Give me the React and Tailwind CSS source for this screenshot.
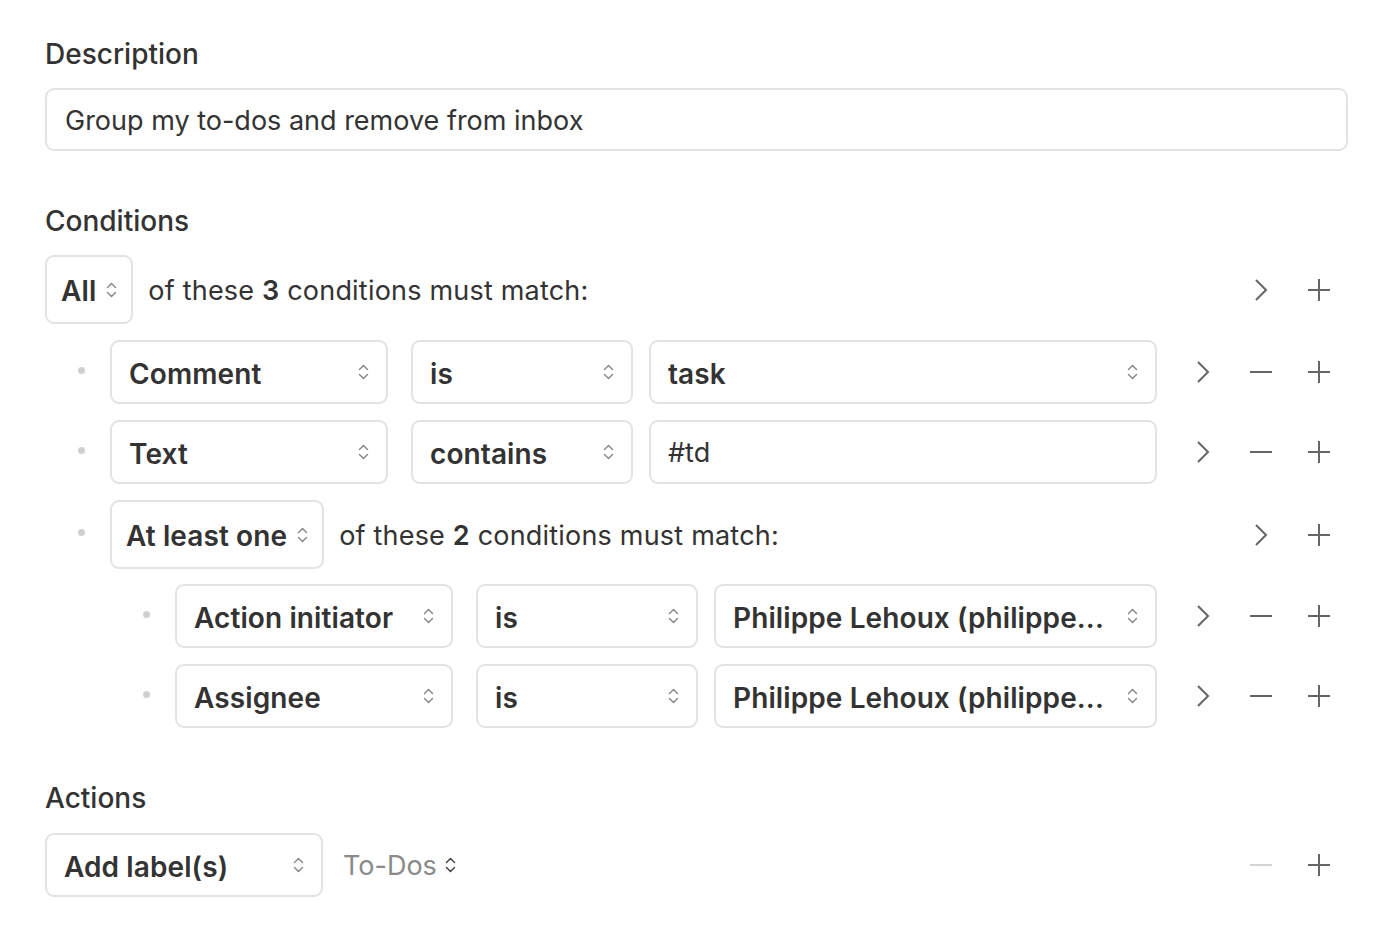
import React from "react";

function UpDown({ className = "text-[#8a8a8a]" }) {
  return (
    <svg width="11" height="18" viewBox="0 0 11 18" fill="none" className={className}>
      <path d="M1.5 6.5L5.5 2.5L9.5 6.5" stroke="currentColor" strokeWidth="1.5" strokeLinecap="round" strokeLinejoin="round" />
      <path d="M1.5 11.5L5.5 15.5L9.5 11.5" stroke="currentColor" strokeWidth="1.5" strokeLinecap="round" strokeLinejoin="round" />
    </svg>
  );
}

function ChevronRight() {
  return (
    <svg width="14" height="24" viewBox="0 0 14 24" fill="none" className="text-[#666]">
      <path d="M2 2L12 12L2 22" stroke="currentColor" strokeWidth="2" />
    </svg>
  );
}

function Minus({ light }) {
  return (
    <svg width="24" height="24" viewBox="0 0 24 24" fill="none" className={light ? "text-[#d4d4d4]" : "text-[#666]"}>
      <path d="M1 12H23" stroke="currentColor" strokeWidth="2" />
    </svg>
  );
}

function Plus() {
  return (
    <svg width="24" height="24" viewBox="0 0 24 24" fill="none" className="text-[#666]">
      <path d="M1 12H23M12 1V23" stroke="currentColor" strokeWidth="2" />
    </svg>
  );
}

function Slot({ children }) {
  return <div className="w-[58px] flex items-center justify-center">{children}</div>;
}

function Icons({ type }) {
  if (type === "group") {
    return (
      <div className="flex w-[174px] shrink-0">
        <Slot />
        <Slot><ChevronRight /></Slot>
        <Slot><Plus /></Slot>
      </div>
    );
  }
  if (type === "action") {
    return (
      <div className="flex w-[174px] shrink-0">
        <Slot />
        <Slot><Minus light /></Slot>
        <Slot><Plus /></Slot>
      </div>
    );
  }
  return (
    <div className="flex w-[174px] shrink-0">
      <Slot><ChevronRight /></Slot>
      <Slot><Minus /></Slot>
      <Slot><Plus /></Slot>
    </div>
  );
}

function Select({ label, className = "" }) {
  return (
    <div className={`h-[64px] flex items-center justify-between pl-[17px] pr-[17px] border-2 border-[#e3e3e3] rounded-[9px] bg-white ${className}`}>
      <span className="font-semibold text-[28px] tracking-[0.1px] text-[#333] truncate pt-[4px]">{label}</span>
      <UpDown />
    </div>
  );
}

function Bullet() {
  return (
    <div className="w-[65px] shrink-0 pl-[33px] -mt-1">
      <div className="w-[7px] h-[7px] rounded-full bg-[#d0d0d0]" />
    </div>
  );
}

function Leaf({ field, op, value, input }) {
  return (
    <div className="flex items-center">
      <Bullet />
      <Select label={field} className="w-[278px] shrink-0" />
      <Select label={op} className="w-[222px] shrink-0 ml-[23px]" />
      {input ? (
        <div className="h-[64px] flex-1 flex items-center pl-[17px] border-2 border-[#e3e3e3] rounded-[9px] ml-[16px] mr-[17px]">
          <span className="text-[27px] text-[#333] pt-[2px]">{value}</span>
        </div>
      ) : (
        <Select label={value} className="flex-1 min-w-0 ml-[16px] mr-[17px]" />
      )}
      <Icons />
    </div>
  );
}

function GroupHead({ mode, count, bullet }) {
  return (
    <div className="flex items-center">
      {bullet && <Bullet />}
      <div className="h-[69px] flex items-center gap-[10px] pl-[14px] pr-[14px] border-2 border-[#e3e3e3] rounded-[9px]">
        <span className="font-semibold text-[28px] tracking-[0.1px] text-[#333] pt-[3px]">{mode}</span>
        <UpDown />
      </div>
      <span className="ml-[15px] text-[27px] text-[#333] tracking-[0.2px] pt-[3px]">
        of these <b className="font-semibold">{count}</b> conditions must match:
      </span>
      <div className="flex-1" />
      <Icons type="group" />
    </div>
  );
}

export default function App() {
  return (
    <div className="min-h-screen bg-white pl-[45px] pr-[46px] pt-[38px] font-['Inter',sans-serif] text-[#333]">
      <div className="text-[28px] font-medium leading-[32px]">Description</div>
      <div className="mt-[18px] h-[63px] flex items-center px-[18px] border-2 border-[#e3e3e3] rounded-[9px]">
        <span className="text-[27px] text-[#333] pt-[3px]">Group my to-dos and remove from inbox</span>
      </div>

      <div className="mt-[54px] text-[28px] font-medium leading-[32px]">Conditions</div>
      <div className="mt-[18px] flex flex-col gap-[16px]">
        <GroupHead mode="All" count="3" />
        <Leaf field="Comment" op="is" value="task" />
        <Leaf field="Text" op="contains" value="#td" input />
        <GroupHead mode="At least one" count="2" bullet />
        <div className="pl-[65px] flex flex-col gap-[16px] -mt-[1px]">
          <Leaf field="Action initiator" op="is" value="Philippe Lehoux (philippe..." />
          <Leaf field="Assignee" op="is" value="Philippe Lehoux (philippe..." />
        </div>
      </div>

      <div className="mt-[54px] text-[28px] font-medium leading-[32px]">Actions</div>
      <div className="mt-[19px] flex items-center">
        <Select label="Add label(s)" className="w-[278px] shrink-0" />
        <div className="ml-[20px] flex items-center gap-[8px]">
          <span className="text-[27px] text-[#8a8a8a] pt-[3px]">To-Dos</span>
          <UpDown className="text-[#444]" />
        </div>
        <div className="flex-1" />
        <Icons type="action" />
      </div>
    </div>
  );
}
